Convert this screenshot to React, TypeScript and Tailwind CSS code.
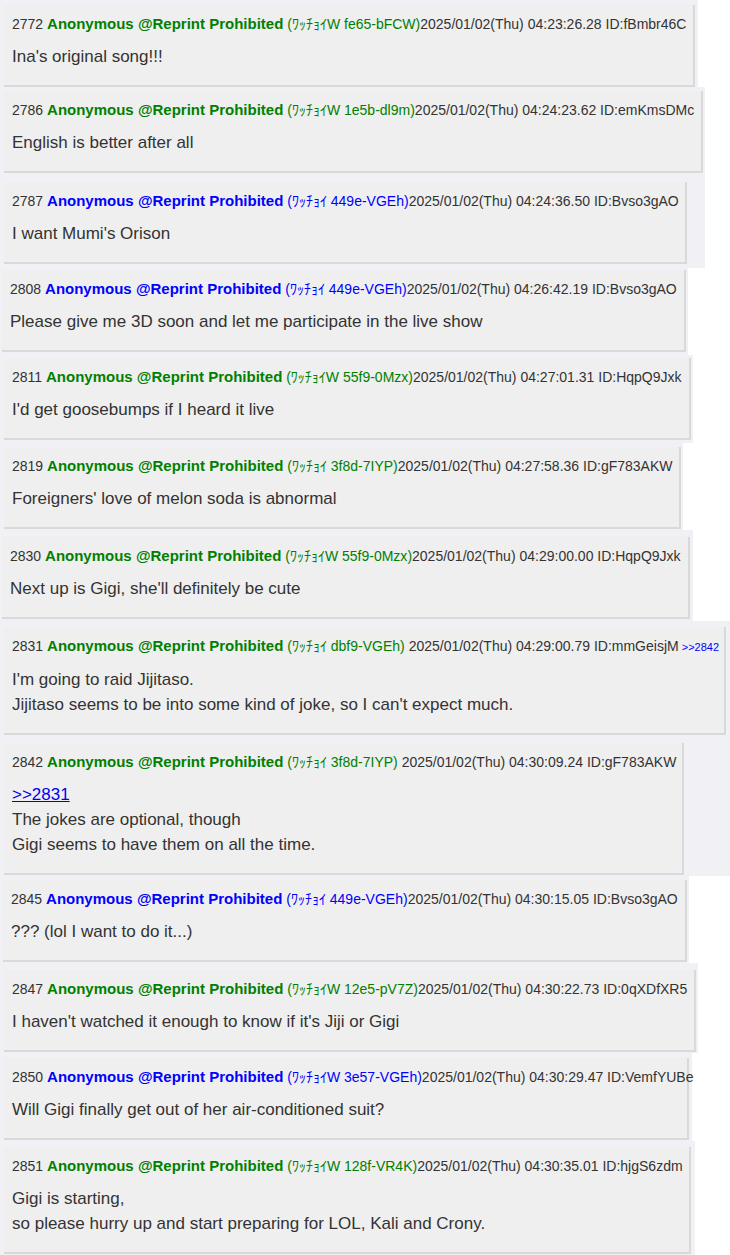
import React from "react";

type Post = {
  no: string;
  blue?: boolean;
  trip: string;
  sp?: boolean;
  time: string;
  id: string;
  reply?: string;
  link?: string;
  lines: string[];
  strip: string;
  box: string;
};

const posts: Post[] = [
  { no: "2772", trip: "ﾜｯﾁｮｲW fe65-bFCW", time: "04:23:26.28", id: "fBmbr46C", lines: ["Ina's original song!!!"], strip: "w-[698px] pt-[5px] pb-[0px] pl-[4px]", box: "w-[691px]" },
  { no: "2786", trip: "ﾜｯﾁｮｲW 1e5b-dl9m", time: "04:24:23.62", id: "emKmsDMc", lines: ["English is better after all"], strip: "w-[705px] pt-[4px] pb-[2px] pl-[4px]", box: "w-[699px]" },
  { no: "2787", blue: true, trip: "ﾜｯﾁｮｲ 449e-VGEh", time: "04:24:36.50", id: "Bvso3gAO", lines: ["I want Mumi's Orison"], strip: "w-[705px] pt-[7px] pb-[4px] pl-[4px]", box: "w-[683px]" },
  { no: "2808", blue: true, trip: "ﾜｯﾁｮｲ 449e-VGEh", time: "04:26:42.19", id: "Bvso3gAO", lines: ["Please give me 3D soon and let me participate in the live show"], strip: "w-[688px] pt-[2px] pb-[3px] pl-[2px]", box: "w-[684px]" },
  { no: "2811", trip: "ﾜｯﾁｮｲW 55f9-0Mzx", time: "04:27:01.31", id: "HqpQ9Jxk", lines: ["I'd get goosebumps if I heard it live"], strip: "w-[693px] pt-[3px] pb-[3px] pl-[4px]", box: "w-[687px]" },
  { no: "2819", trip: "ﾜｯﾁｮｲ 3f8d-7IYP", time: "04:27:58.36", id: "gF783AKW", lines: ["Foreigners' love of melon soda is abnormal"], strip: "w-[683px] pt-[4px] pb-[1px] pl-[4px]", box: "w-[677px]" },
  { no: "2830", trip: "ﾜｯﾁｮｲW 55f9-0Mzx", time: "04:29:00.00", id: "HqpQ9Jxk", lines: ["Next up is Gigi, she'll definitely be cute"], strip: "w-[693px] pt-[7px] pb-[2px] pl-[2px]", box: "w-[688px]" },
  { no: "2831", trip: "ﾜｯﾁｮｲ dbf9-VGEh", sp: true, time: "04:29:00.79", id: "mmGeisjM", reply: ">>2842", lines: ["I'm going to raid Jijitaso.", "Jijitaso seems to be into some kind of joke, so I can't expect much."], strip: "w-[730px] pt-[6px] pb-[1px] pl-[4px]", box: "w-[722px]" },
  { no: "2842", trip: "ﾜｯﾁｮｲ 3f8d-7IYP", sp: true, time: "04:30:09.24", id: "gF783AKW", link: ">>2831", lines: ["The jokes are optional, though", "Gigi seems to have them on all the time."], strip: "w-[730px] pt-[7px] pb-[1px] pl-[4px]", box: "w-[680px]" },
  { no: "2845", blue: true, trip: "ﾜｯﾁｮｲ 449e-VGEh", time: "04:30:15.05", id: "Bvso3gAO", lines: ["??? (lol I want to do it...)"], strip: "w-[689px] pt-[4px] pb-[1px] pl-[3px]", box: "w-[684px]" },
  { no: "2847", trip: "ﾜｯﾁｮｲW 12e5-pV7Z", time: "04:30:22.73", id: "0qXDfXR5", lines: ["I haven't watched it enough to know if it's Jiji or Gigi"], strip: "w-[698px] pt-[7px] pb-[1px] pl-[4px]", box: "w-[692px]" },
  { no: "2850", blue: true, trip: "ﾜｯﾁｮｲW 3e57-VGEh", time: "04:30:29.47", id: "VemfYUBe", lines: ["Will Gigi finally get out of her air-conditioned suit?"], strip: "w-[692px] pt-[5px] pb-[1px] pl-[4px]", box: "w-[685px]" },
  { no: "2851", trip: "ﾜｯﾁｮｲW 128f-VR4K", time: "04:30:35.01", id: "hjgS6zdm", lines: ["Gigi is starting,", "so please hurry up and start preparing for LOL, Kali and Crony."], strip: "w-[695px] pt-[6px] pb-[2px] pl-[4px]", box: "w-[687px]" },
];

function PostView({ p }: { p: Post }) {
  const nameColor = p.blue ? "text-[#0000ff]" : "text-[#008000]";
  return (
    <div className={`bg-[#f0f0f5] ${p.strip}`}>
      <div className={`bg-[#efefef] border-r-2 border-b-2 border-[#d9d9d9] pl-[8px] pt-[9px] pb-[16px] ${p.box}`}>
        <div className="text-[14px] leading-[20px] text-[#333] whitespace-nowrap">
          <span>{p.no} </span>
          <span className={`font-bold text-[15px] ${nameColor}`}>Anonymous @Reprint Prohibited</span>
          <span className={nameColor}> ({p.trip})</span>
          <span>{p.sp ? " " : ""}2025/01/02(Thu) {p.time} ID:{p.id}</span>
          {p.reply && (
            <span className="text-[11px] text-[#0000ff]"> &gt;&gt;2842</span>
          )}
        </div>
        <div className="mt-[10px] text-[17px] leading-[25px] text-[#333]">
          {p.link && (
            <div>
              <span className="text-[#0000ee] underline">{p.link}</span>
            </div>
          )}
          {p.lines.map((l, i) => (
            <div key={i} className="whitespace-nowrap">{l}</div>
          ))}
        </div>
      </div>
    </div>
  );
}

export default function App() {
  return (
    <div className="w-[730px] h-[1255px] overflow-hidden bg-white font-['Liberation_Sans','Noto_Sans_CJK_JP',sans-serif]">
      {posts.map((p) => (
        <PostView key={p.no} p={p} />
      ))}
    </div>
  );
}
